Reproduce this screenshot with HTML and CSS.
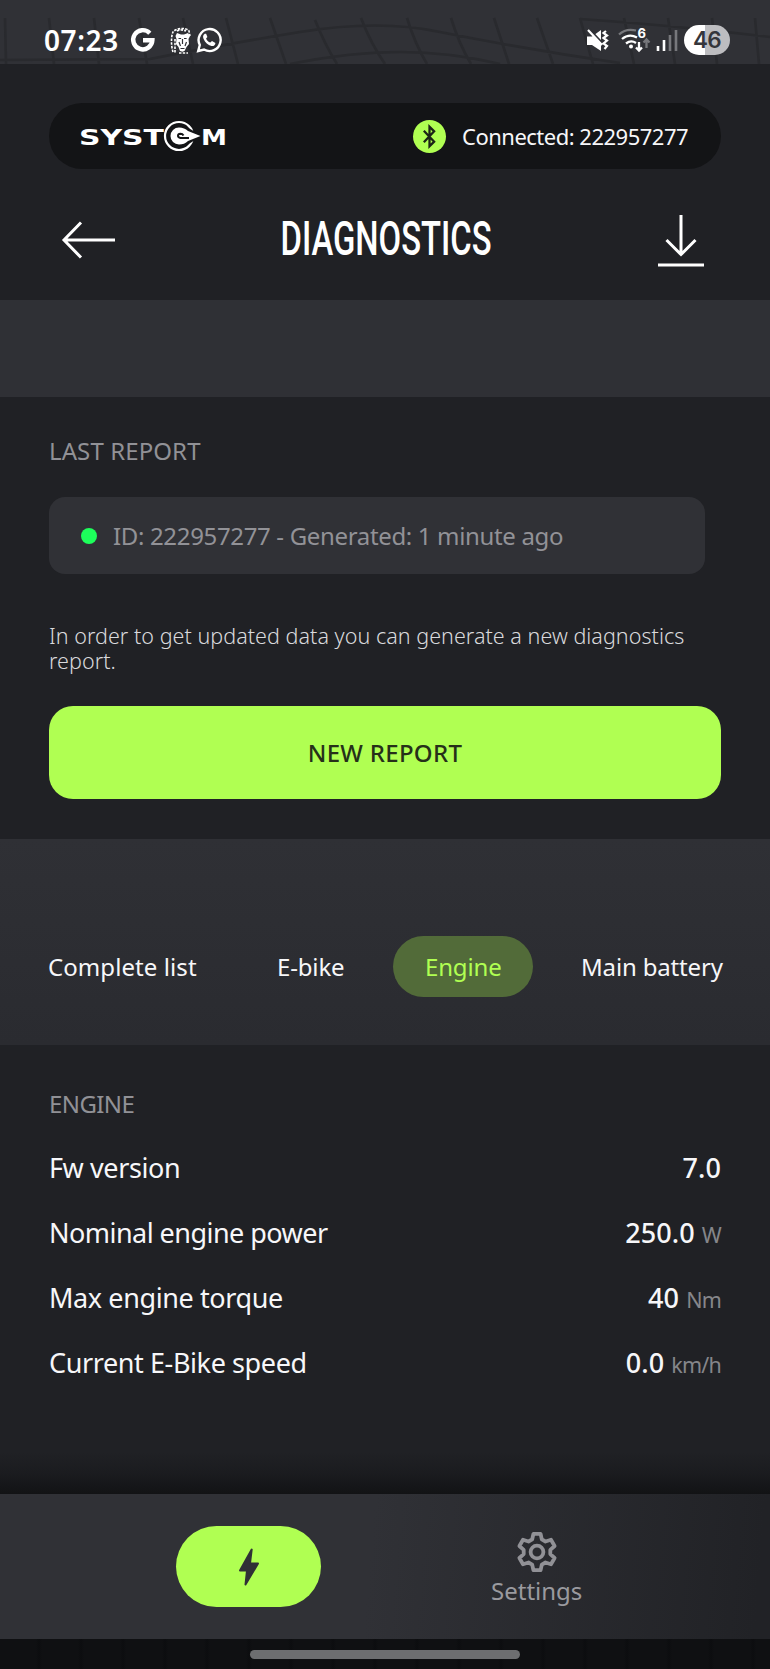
FILE: index.html
```
<!DOCTYPE html>
<html lang="en">
<head>
<meta charset="utf-8">
<title>Diagnostics</title>
<link rel="stylesheet" href="styles.css">
</head>
<body>
<div class="app">
  <div class="status">
    <svg class="status-grid" viewBox="0 0 770 64" aria-hidden="true">
      <path d="M5 18L6 64M49 18l5 46M94 18l5 46M139 18l8 46M183 18l10 46M226 18l12 46M270 18l16 46M315 20q10 25 22 44M361 18q10 26 24 46M407 18q8 26 20 46M451 18q8 26 20 46M494 18l15 46M537 18l16 46M580 18l13 46M624 18l10 46M668 18l7 46M712 18l5 46M755 18l4 46M0 60L150 59Q220 45 300 32T440 32Q530 50 620 63M290 64q60-12 110-12t100 12M580 19q90 6 190 18"/>
    </svg>
    <div class="status-left">
      <span class="clock">07:23</span>
      <svg class="ico-google" viewBox="0 0 24 24"><path d="M18.8 5.2A9.6 9.6 0 1 0 21.4 12.2H12"/></svg>
      <svg class="ico-lion" viewBox="0 0 22 28"><path class="mane" d="M3 25C1 19 1 9 3 5C6 1 16 0 19 4L20 9M5 12v14M9 26h9M7 4q4-2 9 0"/><path class="face" d="M7 6l4 1.500h3L18 6l2 3-1.500 3 .5 5-2.500 3-2 4-2 .8-2.500-.8-1.500-4-2.500-3 .5-5L5.500 9z"/><path class="detail" d="M8.500 11.500h2.600M14 11.500h2.600M12.500 12v5M9 15l1.500 4M16.500 15L15 19M10.500 21.500h4"/></svg>
      <svg class="ico-chat" viewBox="0 0 26 26"><path class="ring" d="M2.200 24l1.600-6A11 11 0 1 1 8 22.500z"/><path class="phone" d="M8.800 6.800c-1.800 1-2.200 3-1.200 5.200 1.600 3.400 4.300 6 7.800 7 2 .5 4-.8 4-3l-3.400-2-1.700 1.600c-2-.8-3.400-2.200-4.200-4.200l1.300-1.500-1.300-3.100z"/></svg>
    </div>
    <div class="status-right">
      <svg class="ico-mute" viewBox="0 0 23 23"><path class="solid" d="M1 7.500h5l9-6.500v21l-9-6H1z"/><path class="cut" d="M3 0l16 17"/><path class="line" d="M2 1l14 15M20 2l-2.500 2 3.500 2.500-3.500 2.500 3.500 2.500-3.500 3 3.500 2.500-2.500 3"/></svg>
      <svg class="ico-wifi" viewBox="0 0 32 24"><path class="dim" d="M1 6.500Q8 0 18 2.500M28.500 20v-8M25.500 14.500l3-3 3 3"/><path d="M4 11q7-6 15-1.500M8 15.500q5-4 10-.5M21 14v8M18 19.500l3 3 3-3"/><circle cx="13" cy="18.500" r="2"/><text x="19.500" y="9.500">6</text></svg>
      <svg class="ico-signal" viewBox="0 0 22 23"><path d="M2 17v5M8 11v11"/><path class="dim" d="M14 6v16M20 1v21"/></svg>
      <span class="battery">46</span>
    </div>
  </div>

  <header class="header">
    <div class="device">
      <svg class="logo" viewBox="0 0 146 32" role="img" aria-label="SYSTEM">
        <text x="-2" y="24.500" textLength="85" lengthAdjust="spacingAndGlyphs">SYST</text>
        <circle cx="98" cy="16" r="14"/>
        <path class="gap" d="M105 6.500l16 9.500-16 9.500z"/>
        <path class="mark" d="M98 7.500q5.500 0 9 3.500l12.500 5-12.500 5q-3.500 3.500-9 3.500a8.500 8.500 0 0 1 0-17z"/>
        <path class="cut" d="M108 18H99.500q-2.500-.4-2.500-2.200 0-2 2.500-2.100 2 0 3 1.700"/>
        <text x="120" y="24.500" textLength="26" lengthAdjust="spacingAndGlyphs">M</text>
      </svg>
      <div class="link">
        <span class="bt"><svg viewBox="0 0 32 32"><path d="M10.500 10.500l10 10.500-4.500 4.500V6.500l4.500 4.500-10 10.500"/></svg></span>
        <span class="link-text">Connected: 222957277</span>
      </div>
    </div>
    <div class="titlebar">
      <svg class="ico-back" viewBox="0 0 56 40"><path d="M54 20H3M20 2.500L3 20l17 17.500"/></svg>
      <svg class="title" viewBox="0 0 210 60" role="heading" aria-label="Diagnostics"><text x="-2.500" y="45" textLength="211" lengthAdjust="spacingAndGlyphs">DIAGNOSTICS</text></svg>
      <svg class="ico-save" viewBox="0 0 46 54"><path d="M23 2v40M8.500 27L23 41.500 37.500 27M0 52h46"/></svg>
    </div>
  </header>

  <div class="band"></div>

  <section class="report">
    <h2 class="label">LAST REPORT</h2>
    <div class="report-card"><i class="dot"></i><span>ID: 222957277 - Generated: 1 minute ago</span></div>
    <p class="hint">In order to get updated data you can generate a new diagnostics report.</p>
    <button class="new-report">NEW REPORT</button>
  </section>

  <nav class="tabs">
    <a class="tab tab-list">Complete list</a>
    <a class="tab tab-bike">E-bike</a>
    <a class="tab tab-engine">Engine</a>
    <a class="tab tab-battery">Main battery</a>
  </nav>

  <section class="engine">
    <h2 class="label label-engine">ENGINE</h2>
    <div class="row"><span>Fw version</span><span class="value">7.0</span></div>
    <div class="row"><span class="tight">Nominal engine power</span><span class="value">250.0<small>W</small></span></div>
    <div class="row"><span>Max engine torque</span><span class="value">40<small>Nm</small></span></div>
    <div class="row"><span>Current E-Bike speed</span><span class="value">0.0<small>km/h</small></span></div>
  </section>

  <nav class="bottom">
    <a class="power"><svg viewBox="0 0 22 38"><path d="M13.700 1.500L12 15.500h8L7.500 36.500 9 22.500H2z"/></svg></a>
    <a class="settings">
      <svg viewBox="-20 -20 40 40"><path d="M-3.600-18.200H3.600L4.800-12.600 8.500-10.500 14-12.200 17.600-6 13.300-2.100V2.100L17.600 6 14 12.200 8.500 10.500 4.800 12.600 3.600 18.200H-3.600L-4.800 12.600-8.500 10.500-14 12.200-17.600 6-13.300 2.100V-2.100L-17.600-6-14-12.200-8.500-10.500-4.800-12.600z"/><circle r="6.400"/></svg>
      <span>Settings</span>
    </a>
  </nav>
  <div class="gesture"><i></i></div>
</div>
</body>
</html>
```

FILE: styles.css
```
* { box-sizing: border-box; }
body { margin: 0; background: #202125; }
.app {
  width: 770px; height: 1669px; overflow: hidden;
  display: flex; flex-direction: column;
  background: #202125; color: #f7f7f9;
  font-family: "Noto Sans", sans-serif; font-size: 24px;
}
svg { display: block; flex: none; fill: none; overflow: visible; }
h2, p { margin: 0; font-weight: 400; }

/* Status bar */
.status {
  position: relative; height: 64px; flex: none;
  display: flex; justify-content: space-between;
  padding: 24px 40px 0 44px; background: #303136;
}
.status-grid { position: absolute; inset: 0; width: 770px; height: 64px; overflow: hidden; stroke: #292a2e; stroke-width: 2.6; }
.status-left, .status-right { position: relative; display: flex; align-items: center; height: 32px; }
.clock { width: 87px; font-size: 28px; font-weight: 600; line-height: 32px; letter-spacing: .6px; color: #fff; }
.ico-google { width: 24px; height: 24px; stroke: #fff; stroke-width: 4.4; }
.ico-lion { width: 22px; height: 28px; margin: 2px 4px 0 15px; }
.ico-lion .mane { stroke: #fff; stroke-width: 1.6; stroke-dasharray: 2.5 1.2; }
.ico-lion .face { fill: #fff; }
.ico-lion .detail { stroke: #303136; stroke-width: 1.2; }
.ico-chat { width: 26px; height: 26px; }
.ico-chat .ring { stroke: #fff; stroke-width: 2.4; }
.ico-chat .phone { fill: #fff; }
.ico-mute { width: 23px; height: 23px; }
.ico-mute .solid { fill: #fff; }
.ico-mute .cut { stroke: #303136; stroke-width: 2.4; }
.ico-mute .line { stroke: #fff; stroke-width: 2.2; }
.ico-wifi { width: 32px; height: 24px; margin-left: 9px; stroke: #fff; stroke-width: 2.3; }
.ico-wifi circle { fill: #fff; stroke: none; }
.ico-wifi text { fill: #fff; stroke: none; font: 700 13px Inter, sans-serif; }
.ico-signal { width: 22px; height: 23px; margin: 0 6px; stroke: #fff; stroke-width: 2.6; }
.ico-wifi .dim, .ico-signal .dim { stroke: #77787c; }
.battery {
  width: 46px; height: 30px; border-radius: 15px;
  background: linear-gradient(90deg, #fff 46%, #bdbdc0 46%);
  color: #35363b; font: 600 22.500px/30px Inter, sans-serif; letter-spacing: -.8px; text-align: center;
}

/* Header */
.header { height: 236px; flex: none; padding: 39px 49px 0; }
.device {
  height: 66px; border-radius: 33px; background: #131416;
  display: flex; align-items: center; justify-content: space-between;
  padding: 0 31px 0 32px;
}
.logo { width: 146px; height: 32px; }
.logo text { fill: #fff; font: 700 21.500px "DejaVu Sans", sans-serif; }
.logo circle { stroke: #fff; stroke-width: 2.2; }
.logo .gap { fill: #131416; }
.logo .mark { fill: #fff; }
.logo .cut { stroke: #131416; stroke-width: 2; }
.link { display: flex; align-items: center; gap: 16px; }
.bt { width: 33px; height: 33px; border-radius: 50%; background: #b0ff52; }
.bt svg { width: 33px; height: 33px; stroke: #1c2416; stroke-width: 2.2; }
.link-text { width: 228px; font-size: 22px; letter-spacing: -.5px; white-space: nowrap; }
.titlebar { height: 64px; margin-top: 39px; padding: 0 17px 0 12px; display: flex; align-items: center; justify-content: space-between; }
.titlebar svg { stroke: #fff; stroke-width: 3; }
.ico-back { width: 56px; height: 40px; }
.ico-save { width: 46px; height: 54px; }
.titlebar .title { width: 210px; height: 60px; fill: #fff; stroke: none; }
.title text { font: 500 49px Roboto, "Open Sans", sans-serif; }

.band { height: 97px; flex: none; background: #2f3035; }

/* Last report */
.report { height: 442px; flex: none; padding: 37px 49px 0; }
.label { font-size: 24px; line-height: 34px; color: #919196; letter-spacing: .1px; }
.report-card {
  width: 656px; height: 77px; margin-top: 29px; padding-left: 32px;
  display: flex; align-items: center; gap: 16px;
  border-radius: 16px; background: #303136; color: #929297; letter-spacing: -.34px;
}
.dot { width: 16px; height: 16px; border-radius: 50%; background: #1dff5b; }
.hint { margin-top: 49px; font-size: 21.500px; font-weight: 300; line-height: 25px; letter-spacing: .04px; color: #d9d9dc; }
.new-report {
  display: block; width: 672px; height: 93px; margin-top: 33px; padding: 0;
  border: 0; border-radius: 24px; background: #b0ff52; color: #263019;
  font: 500 24px "Noto Sans", sans-serif; letter-spacing: .3px;
}

/* Tabs */
.tabs {
  height: 206px; flex: none; padding: 97px 0 0 16px; display: flex; gap: 17px;
  background: linear-gradient(#2f3035, #2a2b30);
}
.tab { height: 61px; padding-left: 32px; line-height: 61px; white-space: nowrap; letter-spacing: -.16px; }
.tab-list { width: 212px; letter-spacing: .08px; }
.tab-bike { width: 131px; }
.tab-engine { width: 140px; border-radius: 31px; background: #526b39; color: #b0ff52; }
.tab-battery { padding-left: 31px; }

/* Engine */
.engine { height: 449px; flex: none; padding: 42px 49px 0; }
.label-engine { letter-spacing: -.6px; margin-bottom: 14px; }
.row { height: 65px; display: flex; align-items: baseline; justify-content: space-between; font-size: 27px; line-height: 65px; letter-spacing: -.4px; }
.tight { letter-spacing: -.54px; }
.value { font-weight: 500; letter-spacing: .1px; }
.value small { margin-left: 7px; font-size: 21.500px; font-weight: 400; letter-spacing: -.8px; color: #85868a; }

/* Bottom navigation */
.bottom {
  position: relative; height: 145px; flex: none;
  display: flex; padding-left: 176px;
  background: linear-gradient(95deg, #303136 48%, #212226 98%);
}
.bottom::before {
  content: ""; position: absolute; left: 0; right: 0; top: -42px; height: 42px;
  background: linear-gradient(rgba(17, 18, 20, 0), rgba(17, 18, 20, .35) 50%, rgba(17, 18, 20, .95));
}
.power { width: 145px; height: 81px; margin-top: 32px; border-radius: 41px; background: #b0ff52; display: flex; align-items: center; justify-content: center; }
.power svg { width: 22px; height: 38px; }
.power path { fill: #303136; stroke: #303136; stroke-width: 2; stroke-linejoin: round; }
.settings { margin-left: 170px; padding-top: 38px; display: flex; flex-direction: column; align-items: center; color: #9a9a9f; line-height: 32px; }
.settings svg { width: 40px; height: 40px; margin-bottom: 3px; stroke: #919196; stroke-width: 3.8; stroke-linejoin: round; }

.gesture {
  height: 30px; flex: none; padding-top: 11px; display: flex; justify-content: center;
  background: repeating-linear-gradient(90deg, #0f1012 0 36px, #0c0d0f 39px, #0f1012 42px);
}
.gesture i { width: 270px; height: 9px; border-radius: 5px; background: #6d6e70; }
```
